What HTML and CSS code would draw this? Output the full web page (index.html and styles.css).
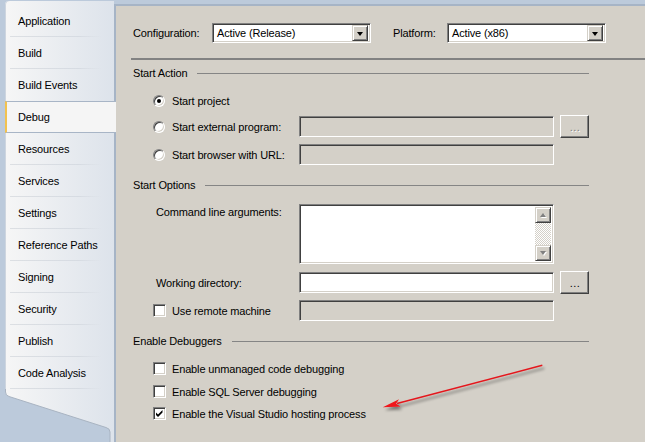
FILE: index.html
```html
<!DOCTYPE html>
<html>
<head>
<meta charset="utf-8">
<link rel="stylesheet" href="styles.css">
</head>
<body>
<div class="page">
  <nav class="nav">
    <ul class="tabs">
      <li class="tab">Application</li>
      <li class="tab">Build</li>
      <li class="tab nosep">Build Events</li>
      <li class="tab sel">Debug</li>
      <li class="tab">Resources</li>
      <li class="tab">Services</li>
      <li class="tab">Settings</li>
      <li class="tab">Reference Paths</li>
      <li class="tab">Signing</li>
      <li class="tab">Security</li>
      <li class="tab">Publish</li>
      <li class="tab">Code Analysis</li>
    </ul>
    <svg class="nav-foot" width="109" height="53" viewBox="0 0 109 53">
      <defs>
        <linearGradient id="navg" gradientUnits="userSpaceOnUse" x1="0" y1="0" x2="109" y2="0">
          <stop offset="0" stop-color="#f6f6f6"/>
          <stop offset="1" stop-color="#dde3eb"/>
        </linearGradient>
      </defs>
      <path d="M0 0 H109 V53 H105 V43 Q105 39.5 101 38.5 L4 7.5 Q0.5 6.5 0.5 3 V0 Z" fill="url(#navg)"/>
      <path d="M0.5 0 V3 Q0.5 6.5 4 7.5 L101 38.5 Q105 39.5 105 43 V53" fill="none" stroke="#a9b4c2" stroke-width="1"/>
    </svg>
  </nav>

  <main class="main">
    <div class="config">
      <span class="lbl-conf">Configuration:</span>
      <div class="select field">
        <span class="val">Active (Release)</span>
        <span class="dd"><i class="tri-down"></i></span>
      </div>
      <span class="lbl-plat">Platform:</span>
      <div class="select field">
        <span class="val">Active (x86)</span>
        <span class="dd"><i class="tri-down"></i></span>
      </div>
    </div>

    <div class="ghead g1"><span>Start Action</span><i class="rule"></i></div>

    <div class="row r-a1">
      <span class="opt"><span class="radio on"></span>Start project</span>
    </div>
    <div class="row r-a2">
      <span class="opt"><span class="radio"></span>Start external program:</span>
      <span class="field input off"></span>
      <span class="btn dis">...</span>
    </div>
    <div class="row r-a3">
      <span class="opt"><span class="radio"></span>Start browser with URL:</span>
      <span class="field input off"></span>
    </div>

    <div class="ghead g2"><span>Start Options</span><i class="rule"></i></div>

    <div class="row r-o1">
      <span class="lbl2 top">Command line arguments:</span>
      <div class="field textarea">
        <div class="sbar">
          <span class="sbtn"><i class="tri-up-dis"></i></span>
          <span class="strack"></span>
          <span class="sbtn"><i class="tri-down-dis"></i></span>
        </div>
      </div>
    </div>
    <div class="row r-o2">
      <span class="lbl2">Working directory:</span>
      <span class="field input"></span>
      <span class="btn">...</span>
    </div>
    <div class="row r-o3">
      <span class="opt"><span class="check"></span>Use remote machine</span>
      <span class="field input off"></span>
    </div>

    <div class="ghead g3"><span>Enable Debuggers</span><i class="rule"></i></div>

    <div class="crow c1"><span class="opt"><span class="check"></span>Enable unmanaged code debugging</span></div>
    <div class="crow c2"><span class="opt"><span class="check"></span>Enable SQL Server debugging</span></div>
    <div class="crow c3"><span class="opt"><span class="check"><svg width="13" height="13" viewBox="0 0 13 13"><path d="M3 5.5 L5 7.5 L9.5 3 V5.5 L5 10 L3 8 Z" fill="#000"/></svg></span>Enable the Visual Studio hosting process</span></div>
  </main>

  <svg class="arrow" width="645" height="442" viewBox="0 0 645 442">
    <defs>
      <filter id="sh" x="-20%" y="-60%" width="140%" height="220%">
        <feGaussianBlur in="SourceAlpha" stdDeviation="1.6"/>
        <feOffset dx="2" dy="3" result="b"/>
        <feComponentTransfer><feFuncA type="linear" slope="0.45"/></feComponentTransfer>
        <feMerge><feMergeNode/><feMergeNode in="SourceGraphic"/></feMerge>
      </filter>
    </defs>
    <g filter="url(#sh)">
      <line x1="542.3" y1="365.3" x2="397" y2="403.6" stroke="#e4161c" stroke-width="1.5"/>
      <path d="M382.8 407.3 L399 399.3 L396 403.8 L400.5 406.6 Z" fill="#f0141a"/>
    </g>
  </svg>
</div>
</body>
</html>
```

FILE: styles.css
```css
* {
  box-sizing: border-box;
  margin: 0;
  padding: 0;
}

body {
  margin: 0;
  width: 645px;
  height: 442px;
  overflow: hidden;
  background: #bccadb;
  font-family: "Liberation Sans", Arial, sans-serif;
  font-size: 11px;
  letter-spacing: -0.15px;
  color: #000;
}

.page {
  position: relative;
  display: flex;
  height: 442px;
}

/* ---------- left navigation ---------- */
.nav {
  width: 109px;
  margin-left: 5px;
  padding-top: 1px;
  display: flex;
  flex-direction: column;
  flex-shrink: 0;
}

.tabs {
  list-style: none;
  padding-top: 4px;
  background: linear-gradient(to right, #f6f6f6, #dde3eb);
  border-top-left-radius: 4px;
  box-shadow: inset 1px 0 0 #cdd5df;
}

.tab {
  position: relative;
  height: 32px;
  display: flex;
  align-items: center;
  padding-left: 13px;
  white-space: nowrap;
}

.tab::after {
  content: "";
  position: absolute;
  left: 5px;
  right: 12px;
  bottom: 0;
  height: 1px;
  background: linear-gradient(to right, #dcdfe3, #d6dbe2 75%, rgba(214, 219, 226, 0));
}

.tab.nosep::after,
.tab.sel::after {
  display: none;
}

.tab.sel {
  background: #f5f5f5;
  border-top: 1px solid #a8b5c6;
  border-bottom: 1px solid #a8b5c6;
  border-left: 2px solid #f2c24f;
  padding-left: 11px;
  margin-right: -2px;
  z-index: 1;
}

.nav-foot {
  display: block;
}

/* ---------- main panel ---------- */
.main {
  flex: 1;
  margin-top: 4px;
  border-top: 2px solid #a6b4c6;
  border-left: 2px solid #a6b4c6;
  background: #d4d0c8;
  display: flex;
  flex-direction: column;
}

.config {
  display: flex;
  align-items: center;
  margin-left: 15px;
  padding: 17px 0 15px 2px;
  border-bottom: 2px solid #828282;
}

.lbl-conf {
  width: 79px;
}

.lbl-plat {
  margin-left: 22px;
  width: 54px;
}

/* sunken 3D field */
.field {
  border: 1px solid;
  border-color: #808080 #ffffff #ffffff #808080;
  box-shadow: inset 1px 1px 0 #404040, inset -1px -1px 0 #d4d0c8;
  background: #fff;
}

.field.off {
  background: #d4d0c8;
}

.select {
  width: 159px;
  height: 20px;
  display: flex;
  align-items: center;
  padding: 2px 2px 2px 4px;
}

.select .val {
  flex: 1;
}

.dd {
  width: 16px;
  height: 16px;
  background: #d4d0c8;
  border: 1px solid;
  border-color: #d4d0c8 #404040 #404040 #d4d0c8;
  box-shadow: inset 1px 1px 0 #fff, inset -1px -1px 0 #808080;
  display: flex;
  align-items: center;
  justify-content: center;
}

.tri-down {
  width: 0;
  height: 0;
  border-left: 3.5px solid transparent;
  border-right: 3.5px solid transparent;
  border-top: 4px solid #000;
  margin-top: 1px;
}

/* group headers */
.ghead {
  display: flex;
  align-items: center;
  height: 14px;
  padding: 0 56px 0 17px;
  gap: 10px;
  white-space: nowrap;
}

.rule {
  flex: 1;
  height: 1px;
  background: #858585;
}

.g1 { margin-top: 6px; }
.g2 { margin-top: 13px; }
.g3 { margin-top: 13px; }

/* rows */
.row {
  display: grid;
  grid-template-columns: 140px 255px 29px;
  column-gap: 6px;
  align-items: center;
  padding-left: 37px;
}

.r-a1 { height: 21px; margin-top: 10px; }
.r-a2 { height: 23px; margin-top: 4px; }
.r-a3 { height: 21px; margin-top: 6px; }
.r-o1 { height: 60px; margin-top: 12px; align-items: start; }
.r-o2 { height: 23px; margin-top: 7px; }
.r-o3 { height: 21px; margin-top: 6px; }

.opt {
  display: flex;
  align-items: center;
  gap: 6px;
  white-space: nowrap;
}

.lbl2 {
  padding-left: 3px;
  white-space: nowrap;
}

.lbl2.top {
  line-height: 14px;
  margin-top: 1px;
}

.input {
  height: 21px;
  display: block;
}

.textarea {
  height: 60px;
  display: flex;
  justify-content: flex-end;
  padding: 2px;
}

.sbar {
  width: 16px;
  display: flex;
  flex-direction: column;
}

.sbtn {
  height: 16px;
  background: #d4d0c8;
  border: 1px solid;
  border-color: #d4d0c8 #404040 #404040 #d4d0c8;
  box-shadow: inset 1px 1px 0 #fff, inset -1px -1px 0 #808080;
  display: flex;
  align-items: center;
  justify-content: center;
}

.strack {
  flex: 1;
  background-image: conic-gradient(#ffffff 25%, #d4d0c8 0 50%, #ffffff 0 75%, #d4d0c8 0);
  background-size: 2px 2px;
}

.tri-up-dis {
  width: 0;
  height: 0;
  border-left: 3.5px solid transparent;
  border-right: 3.5px solid transparent;
  border-bottom: 4px solid #808080;
  filter: drop-shadow(1px 1px 0 #fff);
}

.tri-down-dis {
  width: 0;
  height: 0;
  border-left: 3.5px solid transparent;
  border-right: 3.5px solid transparent;
  border-top: 4px solid #808080;
  filter: drop-shadow(1px 1px 0 #fff);
}

/* raised button */
.btn {
  height: 23px;
  background: #d4d0c8;
  border: 1px solid;
  border-color: #ffffff #404040 #404040 #ffffff;
  box-shadow: inset -1px -1px 0 #808080;
  display: flex;
  align-items: center;
  justify-content: center;
  letter-spacing: 0.5px;
  padding-left: 1px;
}

.btn.dis {
  color: #808080;
  text-shadow: 1px 1px 0 #fff;
}

/* radio & checkbox */
.radio {
  position: relative;
  width: 12px;
  height: 12px;
  margin-right: 1px;
  border-radius: 50%;
  border: 1px solid;
  border-color: #808080 #ffffff #ffffff #808080;
  box-shadow: inset 1px 1px 0 #404040, inset -1px -1px 0 #d4d0c8;
  background: #fff;
  flex-shrink: 0;
}

.radio.on::after {
  content: "";
  position: absolute;
  left: 3px;
  top: 3px;
  width: 4px;
  height: 4px;
  border-radius: 50%;
  background: #000;
}

.check {
  width: 13px;
  height: 13px;
  border: 1px solid;
  border-color: #808080 #ffffff #ffffff #808080;
  box-shadow: inset 1px 1px 0 #404040, inset -1px -1px 0 #d4d0c8;
  background: #fff;
  flex-shrink: 0;
  position: relative;
}

.check svg {
  position: absolute;
  left: -1px;
  top: -1px;
  display: block;
}

.crow {
  height: 13px;
  padding-left: 37px;
  display: flex;
  align-items: center;
}

.c1 { margin-top: 14px; }
.c2 { margin-top: 10px; }
.c3 { margin-top: 9px; }

/* annotation arrow overlay */
.arrow {
  position: absolute;
  left: 0;
  top: 0;
  pointer-events: none;
}
```
